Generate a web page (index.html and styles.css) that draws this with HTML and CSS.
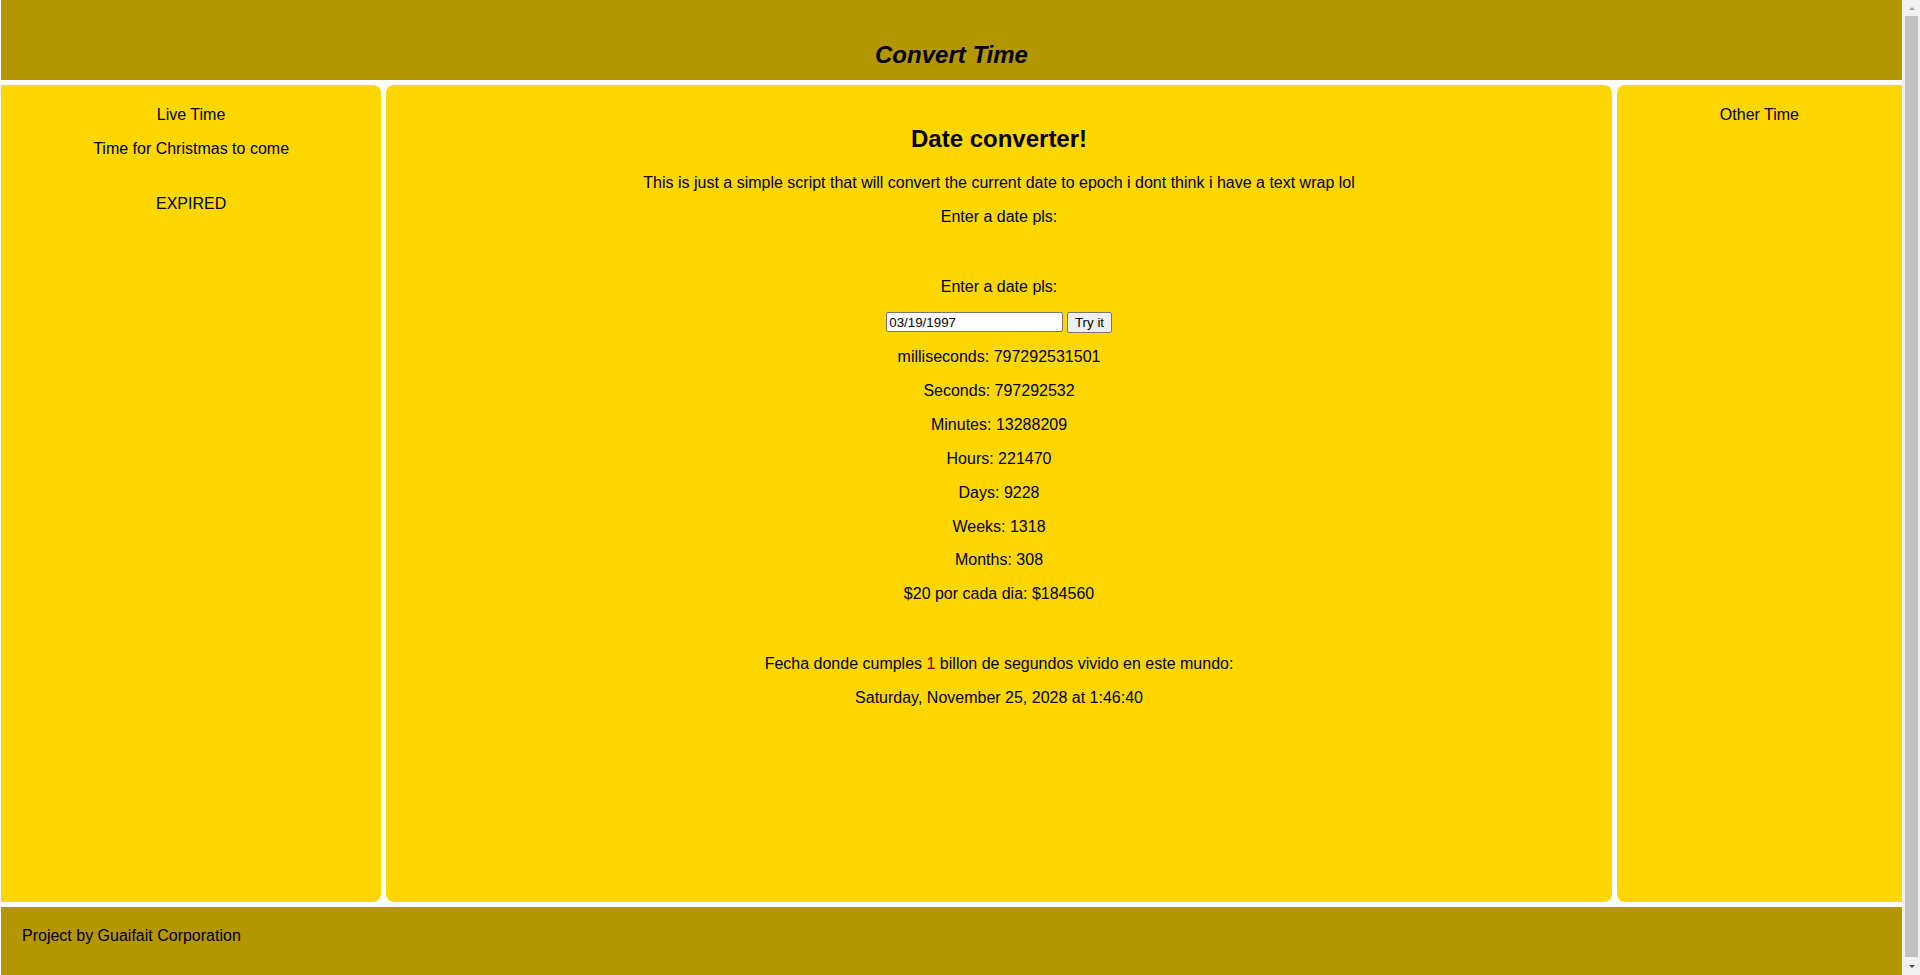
FILE: index.html
```html
<!DOCTYPE html>
<html lang="en">
<head>
<meta charset="utf-8">
<title>Convert Time</title>
<link rel="stylesheet" href="styles.css">
</head>
<body>
<div class="page">
  <header class="top">
    <h2 class="title">Convert Time</h2>
  </header>
  <aside class="panel side left">
    <p>Live Time</p>
    <p>Time for Christmas to come</p>
    <p class="expired">EXPIRED</p>
  </aside>
  <main class="panel center">
    <h2 class="heading">Date converter!</h2>
    <p>This is just a simple script that will convert the current date to epoch i dont think i have a text wrap lol</p>
    <p>Enter a date pls:</p>
    <p class="gap-a">Enter a date pls:</p>
    <div class="form-row">
      <input class="date-input" type="text" value="03/19/1997">
      <button class="try-btn" type="button">Try it</button>
    </div>
    <p>milliseconds: 797292531501</p>
    <p>Seconds: 797292532</p>
    <p>Minutes: 13288209</p>
    <p>Hours: 221470</p>
    <p>Days: 9228</p>
    <p>Weeks: 1318</p>
    <p>Months: 308</p>
    <p>$20 por cada dia: $184560</p>
    <p class="gap-b">Fecha donde cumples <span class="red">1</span> billon de segundos vivido en este mundo:</p>
    <p>Saturday, November 25, 2028 at 1:46:40</p>
  </main>
  <aside class="panel side right">
    <p>Other Time</p>
  </aside>
  <footer class="bottom">Project by Guaifait Corporation</footer>
</div>
<div class="scrollbar" aria-hidden="true">
  <div class="sb-btn sb-up"><span class="tri-up"></span></div>
  <div class="sb-track"><div class="sb-thumb"></div></div>
  <div class="sb-btn sb-down"><span class="tri-down"></span></div>
</div>
</body>
</html>
```

FILE: styles.css
```css
html, body {
  margin: 0;
  padding: 0;
}

body {
  font-family: "Liberation Sans", Arial, sans-serif;
  font-size: 16px;
  line-height: 1.117;
  color: #000;
  background: #fff;
  overflow: hidden;
}

.page {
  display: grid;
  grid-template-columns: 20% 1fr 15%;
  grid-template-rows: 80px 1fr 68px;
  gap: 5px;
  height: 975px;
  padding: 0 1px;
  margin-right: 17px;
}

.top {
  grid-column: 1 / -1;
  background: #b39600;
  text-align: center;
}

.title {
  margin: 42px 0 0;
  font-size: 24px;
  font-weight: bold;
  font-style: italic;
}

.panel {
  background: #ffd700;
  text-align: center;
}

.left {
  border-radius: 0 8px 8px 0;
  padding-top: 4.5px;
}

.right {
  border-radius: 8px 0 0 8px;
  padding-top: 4.5px;
}

.center {
  border-radius: 8px;
  padding-top: 21px;
}

.panel p {
  margin: 16px 0;
}

.left p + p {
  margin-top: 16.8px;
}

.heading {
  margin: 19.92px 0 21px;
  font-size: 24px;
  font-weight: bold;
}

.left .expired {
  margin-top: 37px;
}

.center .gap-a {
  margin-top: 53px;
}

.center .gap-b {
  margin-top: 51.8px;
}

.red {
  color: #8b0000;
}

.form-row {
  display: flex;
  justify-content: center;
  align-items: flex-start;
  gap: 4px;
  height: 20px;
}

.date-input {
  box-sizing: border-box;
  width: 177px;
  height: 20px;
  margin: 0;
  padding: 1px 2px;
  border: 1px solid #767676;
  border-radius: 2px;
  background: #fff;
  color: #000;
  font-family: "Liberation Sans", Arial, sans-serif;
  font-size: 13.33px;
}

.try-btn {
  box-sizing: border-box;
  width: 44.5px;
  height: 20.5px;
  margin: 0;
  padding: 1px 6px;
  border: 1px solid #767676;
  border-radius: 2px;
  background: #efefef;
  color: #000;
  font-family: "Liberation Sans", Arial, sans-serif;
  font-size: 13.33px;
  line-height: 1;
}

.bottom {
  grid-column: 1 / -1;
  background: #b39600;
  padding: 20px 21px;
}

/* imitation of the browser's classic scrollbar */
.scrollbar {
  position: fixed;
  top: 0;
  right: 0;
  width: 17px;
  height: 100vh;
  background: #f1f1f1;
  display: flex;
  flex-direction: column;
}

.sb-btn {
  height: 16px;
  display: flex;
  align-items: center;
  justify-content: center;
  flex: none;
}

.sb-down {
  height: 17px;
}

.tri-up {
  width: 0;
  height: 0;
  border-left: 3.5px solid transparent;
  border-right: 3.5px solid transparent;
  border-bottom: 3.5px solid #a3a3a3;
}

.tri-down {
  width: 0;
  height: 0;
  border-left: 3.5px solid transparent;
  border-right: 3.5px solid transparent;
  border-top: 3.5px solid #505050;
}

.sb-track {
  flex: 1;
  padding: 0 2px 1px;
  display: flex;
}

.sb-thumb {
  flex: 1;
  background: #c1c1c1;
}
```
